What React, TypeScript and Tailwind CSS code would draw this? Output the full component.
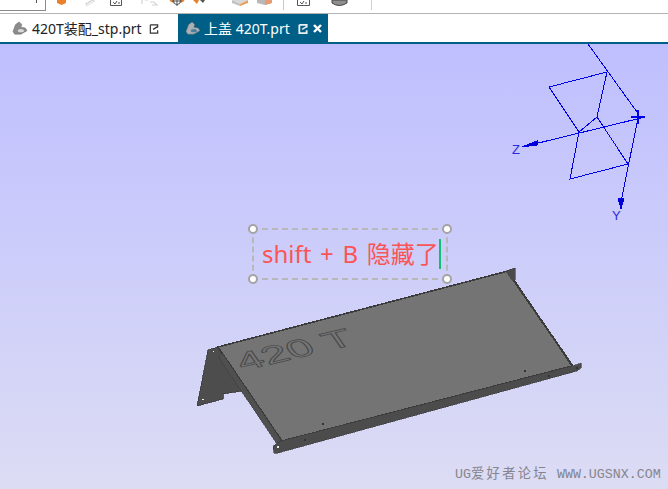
const CJK = "font-['Noto_Sans','Noto_Sans_CJK_SC',sans-serif]";

function PartIcon({ light }: { light?: boolean }) {
  return (
    <svg width="16" height="14" viewBox="0 0 18 16" className="shrink-0">
      <path d="M1 12 L4 4 L8 1 L11 4 L10 7 L15 8 L17 11 L10 15 L3 15 Z" fill={light ? "#aab2b8" : "#8c8c8c"} stroke="#666" strokeWidth="0.6" />
      <ellipse cx="10" cy="11" rx="3.5" ry="1.8" fill={light ? "#4d7f9c" : "#d8d8d8"} />
    </svg>
  );
}

function DocMark({ color, fat }: { color: string; fat?: boolean }) {
  return (
    <svg width="10" height="11" viewBox="0 0 10 12" className="shrink-0">
      <path d="M1 2 H9 V5 M9 8 V11 H1 V2" fill="none" stroke={color} strokeWidth={fat ? 2 : 1.3} />
      <path d="M4 7 L9 4" stroke={color} strokeWidth="1.5" />
    </svg>
  );
}

function Toolbar() {
  return (
    <div className="h-[13px] bg-white flex overflow-hidden shrink-0">
      <div className="w-[46px] h-[11px] border-r border-b border-[#8a8a8a] relative shrink-0">
        <div className="absolute left-[36px] top-0 w-px h-[3px] bg-[#555]" />
      </div>
      <svg width="340" height="13" viewBox="46 0 340 13" className="shrink-0">
        {/* orange hex */}
        <path d="M57 0 H66 V3 L61.5 5 L57 3 Z" fill="#e8812a" />
        {/* chain, greyed */}
        <path d="M86 5 L94 0" stroke="#d6d6d6" strokeWidth="3" fill="none" />
        <path d="M87 5 L93 1" stroke="#fff" strokeWidth="1" fill="none" />
        {/* doc with tick */}
        <path d="M110.5 0 V5.5 H121.5 V0" fill="#fff" stroke="#555" />
        <path d="M113 2 L115 4 L117 1 M118 3 H120" fill="none" stroke="#555" />
        {/* grey dashed */}
        <path d="M142 0 V4 M145 0 H148 M150 2 H154 L157 5 L152 5" fill="none" stroke="#d4d4d4" strokeWidth="1.2" />
        {/* cross hairs */}
        <path d="M170 0 L174 2 M184 0 L180 2" stroke="#e8812a" strokeWidth="2" />
        <circle cx="177" cy="1" r="3.5" fill="none" stroke="#555" />
        <path d="M177 0 V6 M172 1 H182" stroke="#555" />
        <path d="M193 0 L197 4 L199 0 Z" fill="#e8812a" />
        <path d="M200 0 L203 3 L205 0 Z" fill="#555" />
        {/* cube */}
        <path d="M232 0 L240 4 L248 0 Z" fill="#d8d8d8" />
        <path d="M232 0 L240 4 V6 L232 3 Z" fill="#c0c0c0" />
        <path d="M240 4 L248 0 V3 L240 6 Z" fill="#e8a060" />
        {/* shaded cube */}
        <path d="M257 0 H272 V3 L265 5 L257 3 Z" fill="#b8b8b8" />
        <path d="M265 0 H272 V3 L265 5 Z" fill="#e89a70" />
        {/* separator */}
        <path d="M283.5 0 V10" stroke="#c8c8c8" />
        {/* doc */}
        <path d="M297.5 0 V5.5 H309.5 V0" fill="#fff" stroke="#555" />
        <path d="M300 2 L302 4 L304 1 M305 3 H307" fill="none" stroke="#555" />
        {/* cylinder */}
        <path d="M332 0 V3 Q339 8 347 3 V0 Z" fill="#8e8e8e" stroke="#444" />
        <path d="M371.5 0 V10" stroke="#d0d0d0" />
      </svg>
    </div>
  );
}

function Tabs() {
  return (
    <div className={`h-[29px] bg-white flex shrink-0 border-t border-[#b4b4b4] ${CJK}`}>
      <div className="w-[178px] flex items-center pl-[12px] text-[14px] text-[#222] gap-[4px]">
        <PartIcon />
        <span className="whitespace-nowrap">420T装配_stp.prt</span>
        <span className="ml-[3px]"><DocMark color="#333" /></span>
      </div>
      <div className="w-[150px] bg-[#005f87] flex items-center pl-[7px] text-[14px] text-white">
        <PartIcon light />
        <span className="ml-[3px] whitespace-nowrap">上盖 420T.prt</span>
        <span className="ml-[8px]"><DocMark color="#e8f0f5" fat /></span>
        <svg width="9" height="9" viewBox="0 0 9 9" className="ml-[5px] shrink-0">
          <path d="M1 1 L8 8 M8 1 L1 8" stroke="#fff" strokeWidth="2.4" />
        </svg>
      </div>
    </div>
  );
}

function Triad() {
  return (
    <g fill="none" stroke="#0000e6" strokeWidth="1" shapeRendering="crispEdges">
      <path d="M588 44 L637 112" />
      <path d="M607 72 L549 87 L579 132 L597 117 L607 72" />
      <path d="M579 132 L570 179 L628 164 L597 117" />
      <path d="M645 117 L522 147" />
      <path d="M638 118 L620 207" />
      <path d="M631 117 H645 M638 110 V124" strokeWidth="2" />
      <path d="M522 147 L537 141 L537 145 Z" fill="#0000d0" />
      <path d="M621 209 L618 198 L624 198 Z" fill="#0000d0" />
      <text x="512" y="154" fontSize="13" fill="#2a2ae0" stroke="none" fontFamily="Liberation Sans">Z</text>
      <text x="612" y="220" fontSize="13" fill="#2a2ae0" stroke="none" fontFamily="Liberation Sans">Y</text>
    </g>
  );
}

function Model() {
  return (
    <g shapeRendering="crispEdges">
      {/* left end wall */}
      <path d="M208 350 L218 347 L242 391 L223 394 L223 399 L197 406 Z" fill="#4d4d4d" stroke="#3a3a3a" strokeWidth="0.8" />
      <circle cx="213.5" cy="351.5" r="1" fill="#eee" />
      <circle cx="203" cy="399.5" r="1" fill="#eee" />
      {/* main sheet */}
      <path d="M218 347 L508 271 L572 366 L282 441 Z" fill="#747474" stroke="#3c3c3c" strokeWidth="1.6" />
      <path d="M512 278 L572 365" stroke="#3c3c3c" strokeWidth="2" fill="none" />
      {/* left flange */}
      <path d="M222 353 L281 440 L277 444 L219 358 Z" fill="#505050" stroke="#3c3c3c" strokeWidth="0.6" />
      {/* bottom flange */}
      <path d="M273 446 L281 441 L572 366 L581 363 L581 368 L577 371 L278 453 L274 453 Z" fill="#4c4c4c" stroke="#3a3a3a" strokeWidth="0.6" />
      <circle cx="278" cy="447" r="1" fill="#eee" />
      <circle cx="305" cy="440" r="1.5" fill="#333" />
      <circle cx="323" cy="424" r="1.4" fill="#333" />
      <circle cx="525" cy="371" r="1.4" fill="#333" />
      <circle cx="549" cy="376" r="1.5" fill="#333" />
      <circle cx="577" cy="368" r="1.5" fill="#333" />
      {/* top right corner */}
      <path d="M506 271 L515 268 L515 280 L512 280 Z" fill="#4a4a4a" stroke="#3a3a3a" strokeWidth="0.6" />
      {/* engraved mark */}
      <text
        transform="matrix(1.6 -0.38 0.57 0.82 243 371)"
        fontSize="28"
        fontFamily="Liberation Sans"
        fill="none"
        stroke="#454545"
        strokeWidth="0.7"
      >
        420 T
      </text>
    </g>
  );
}

function Handle({ className }: { className: string }) {
  return <div className={`absolute w-[10px] h-[10px] rounded-full bg-white border-2 border-[#a4a4a4] ${className}`} />;
}

function Viewport() {
  return (
    <div className="relative flex-1 overflow-hidden bg-gradient-to-b from-[#bfbfff] to-[#dcdcf4]">
      <svg width="668" height="489" viewBox="0 44 668 489" className="absolute left-0 top-0">
        <Triad />
        <Model />
      </svg>
      <div className={`absolute left-[252px] top-[184px] w-[196px] h-[52px] border-2 border-dashed border-[#b8b8b8] flex items-center pl-[8px] text-[24px] leading-none text-[#fa5555] whitespace-nowrap [word-spacing:2.4px] ${CJK}`}>
        <span>shift + B 隐藏了</span>
        <span className="w-[2px] h-[30px] bg-[#10c070]" />
      </div>
      <Handle className="left-[248px] top-[180px]" />
      <Handle className="left-[442px] top-[180px]" />
      <Handle className="left-[248px] top-[230px]" />
      <Handle className="left-[442px] top-[230px]" />
      <div className="absolute left-[455px] top-[424px] text-[13.3px] leading-none text-[#85858e] whitespace-nowrap font-['Liberation_Mono','Noto_Sans_CJK_SC',monospace]">
        UG<span className="tracking-[2.3px]">爱好者论坛</span> WWW.UGSNX.COM
      </div>
    </div>
  );
}

export default function App() {
  return (
    <div className="w-[668px] h-[489px] flex flex-col overflow-hidden bg-white">
      <Toolbar />
      <Tabs />
      <div className="h-[2px] bg-[#005f87] shrink-0" />
      <Viewport />
    </div>
  );
}
